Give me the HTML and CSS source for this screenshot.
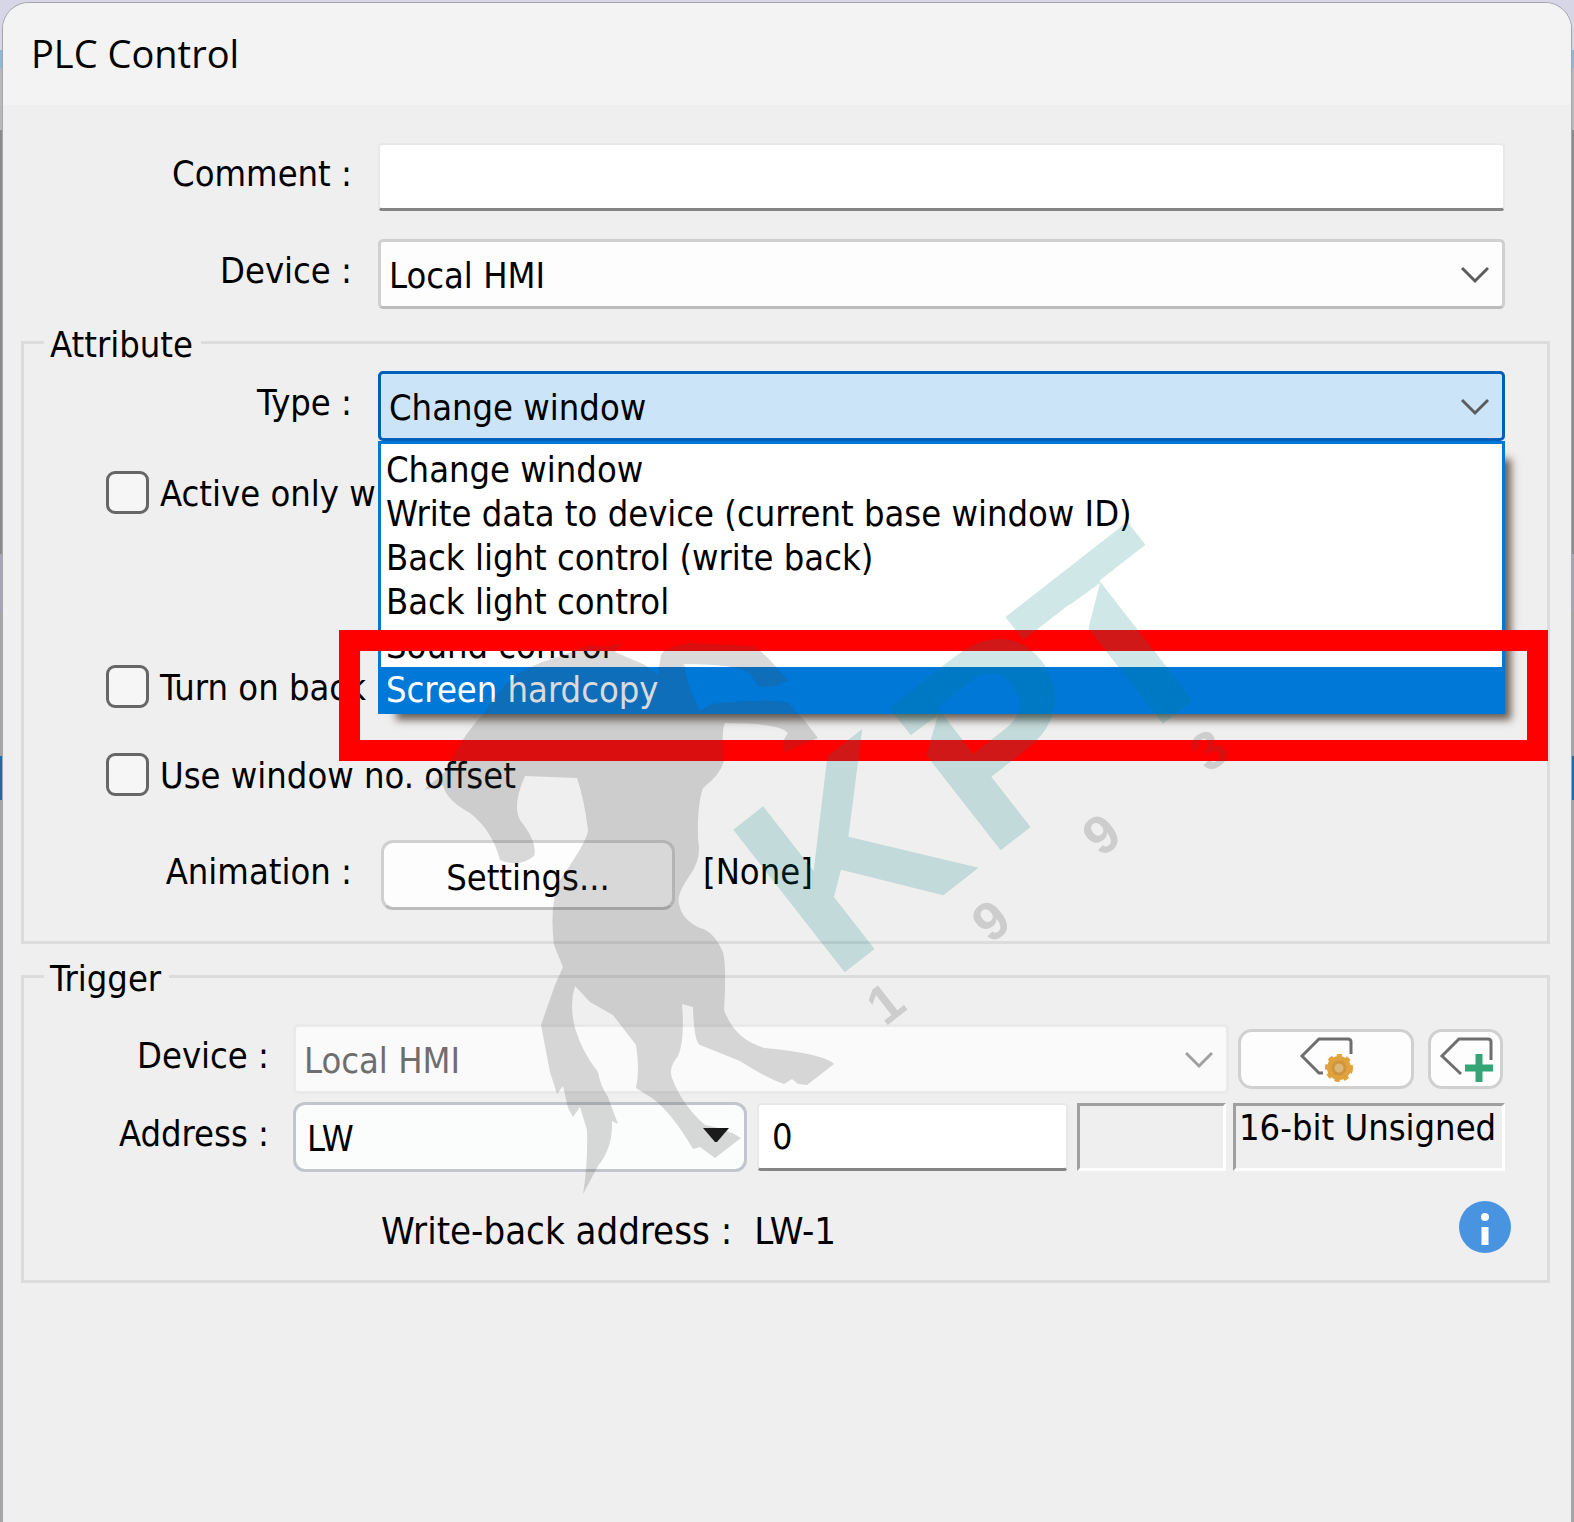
FILE: index.html
```html
<!DOCTYPE html>
<html lang="en">
<head>
<meta charset="UTF-8">
<meta name="viewport" content="width=device-width, initial-scale=1.0">
<title>PLC Control</title>
<link rel="stylesheet" href="styles.css">
</head>
<body>
<div class="dialog">
  <h1 class="titlebar">PLC Control</h1>
  <form class="content">
    <div class="row top-row">
      <label for="comment">Comment :</label>
      <input class="text-box" type="text" id="comment" name="comment">
    </div>
    <div class="row top-row">
      <label for="device">Device :</label>
      <div class="combo">
        <select id="device" name="device"><option>Local HMI</option></select>
        <svg class="chevron" viewBox="0 0 28 18"><path d="M1 2 L14 15 L27 2"/></svg>
      </div>
    </div>

    <fieldset class="attribute">
      <legend>Attribute</legend>
      <div class="row">
        <label for="type">Type :</label>
        <div class="combo open">
          <select id="type" name="type"><option>Change window</option></select>
          <svg class="chevron" viewBox="0 0 28 18"><path d="M1 2 L14 15 L27 2"/></svg>
          <ul class="menu" role="listbox">
            <li>Change window</li>
            <li>Write data to device (current base window ID)</li>
            <li>Back light control (write back)</li>
            <li>Back light control</li>
            <li>Sound control</li>
            <li class="selected">Screen hardcopy</li>
          </ul>
        </div>
      </div>
      <div class="check active-only">
        <input type="checkbox" id="activeOnly">
        <label for="activeOnly">Active only w</label>
      </div>
      <div class="check turn-on">
        <input type="checkbox" id="turnOn">
        <label for="turnOn">Turn on back</label>
      </div>
      <div class="check">
        <input type="checkbox" id="offset">
        <label for="offset">Use window no. offset</label>
      </div>
      <div class="row animation">
        <label for="settings">Animation :</label>
        <button type="button" class="settings" id="settings">Settings...</button>
        <span class="none">[None]</span>
      </div>
    </fieldset>

    <fieldset class="trigger">
      <legend>Trigger</legend>
      <div class="row">
        <label for="triggerDevice">Device :</label>
        <div class="combo">
          <select id="triggerDevice" disabled><option>Local HMI</option></select>
          <svg class="chevron" viewBox="0 0 28 18"><path d="M1 2 L14 15 L27 2"/></svg>
        </div>
        <button type="button" class="tag-button tag-settings" aria-label="Tag settings">
          <svg width="54" height="46" viewBox="0 0 54 46">
            <path class="tag" d="M24 37 H20 L3 20 L20 3 H49 Q52 3 52 6 V18"/>
            <circle cx="40" cy="32" r="12" fill="#e0a23c"/>
            <circle class="teeth" cx="40" cy="32" r="12"/>
            <circle cx="40" cy="32" r="6" fill="#dcb578" stroke="#d0953a" stroke-width="3"/>
          </svg>
        </button>
        <button type="button" class="tag-button tag-add" aria-label="Add tag">
          <svg width="54" height="46" viewBox="0 0 54 46">
            <path class="tag" d="M22 38 L3 20 L20 3 H49 Q52 3 52 6 V24"/>
            <path d="M40 18 V46 M26 32 H54" stroke="#35a576" stroke-width="7"/>
          </svg>
        </button>
      </div>
      <div class="row address">
        <label for="address">Address :</label>
        <div class="combo address-type">
          <select id="address"><option>LW</option></select>
          <svg class="arrow" viewBox="0 0 26 16"><path d="M0 1 H26 L14 15 H12 Z"/></svg>
        </div>
        <input class="text-box address-no" type="text" value="0" aria-label="Address number">
        <div class="sunken"></div>
        <div class="sunken format">16-bit Unsigned</div>
      </div>
      <div class="write-back">
        <span>Write-back address :</span>
        <span>LW-1</span>
        <svg class="info" width="52" height="52" viewBox="0 0 52 52">
          <circle cx="26" cy="26" r="26" fill="#4894e0"/>
          <circle cx="26" cy="16" r="4" fill="#fff"/>
          <path d="M26 26 V44" stroke="#fff" stroke-width="7"/>
        </svg>
      </div>
    </fieldset>
  </form>
</div>

<svg class="watermark" width="860" height="720" viewBox="400 500 860 720" aria-hidden="true">
  <mask id="cuts">
    <rect x="400" y="500" width="860" height="720" fill="#fff"/>
    <path d="M1100 583 L1088 630 L1068 606 Z M938 715 L926 757 L907 738 Z" fill="#000"/>
  </mask>
  <path class="horse" d="M622 643 L615 652 L645 665 L658 675 L661 655 Q664 647 690 643 Q735 645 755 646 L768 658 L788 680 Q775 689 758 686 L750 674 Q740 664 684 664 L690 690 L700 711 L712 704 Q770 698 788 703 L804 720 L818 738 L785 752 Q780 743 788 733 Q780 723 725 723 Q721 730 724 760 Q722 773 703 788 Q697 805 698 840 Q702 858 690 875 Q676 895 679 904 Q682 920 700 928 Q713 931 722 950 Q727 960 724 1010 Q735 1040 765 1048 Q825 1054 834 1064 L807 1085 L798 1084 L792 1079 L784 1084 Q770 1080 740 1061 L700 1045 Q694 1042 693 1007 L682 1004 Q685 1040 678 1056 Q668 1068 672 1078 Q682 1105 705 1125 Q728 1129 741 1138 L715 1158 L700 1147 L693 1149 Q672 1113 652 1098 L636 1088 Q640 1070 636 1045 L613 1015 L590 1002 L575 986 Q569 1005 575 1028 Q582 1052 598 1072 Q600 1085 608 1097 L618 1124 L612 1121 Q613 1148 598 1166 L583 1194 Q588 1165 587 1130 L580 1107 L573 1117 L568 1108 L563 1086 L557 1094 L550 1072 L541 1025 L555 985 L563 967 L554 945 Q549 905 560 880 Q588 840 588 830 Q584 798 577 778 L525 776 Q512 805 520 820 Q538 843 534 856 Q520 868 500 860 Q492 830 470 813 Q446 800 443 785 L424 790 L447 770 Q460 738 485 712 Q508 670 555 658 L590 645 L605 647 Z"/>
  <g mask="url(#cuts)">
    <text class="brand" transform="translate(845 972) rotate(-38)" x="-18 180 342">KPT</text>
  </g>
  <text class="year" transform="translate(885 1027) rotate(-38)" x="0 134 274 411">1993</text>
</svg>
</body>
</html>
```
FILE: styles.css
```css
* {
  box-sizing: border-box;
}
body {
  margin: 0;
  padding: 3px 3px 0;
  min-height: 100vh;
  display: flex;
  position: relative;
  overflow-x: hidden;
  font-family: 'DejaVu Sans Condensed', 'Noto Sans', sans-serif;
  font-size: 36px;
  line-height: 44px;
  color: #000;
  /* what shows of the desktop behind the dialog */
  background: linear-gradient(#d6d6e6 0 50px, #8fb8d4 50px 68px, #b8b8bc 68px 130px, #8a8a8a 130px 554px, #a8a4b4 554px 612px, #a5a5a5 612px 756px, #1d6ca4 756px 800px, #a5a5a5 800px);
}
.dialog {
  flex: 1;
  min-width: 0;
  background-color: #efefef;
  border-radius: 26px 26px 0 0;
  box-shadow: 0 0 0 1px #a5a5ad;
}
.titlebar {
  margin: 0;
  height: 102px;
  padding: 28px 28px 0;
  border-radius: 26px 26px 0 0;
  background-color: #f3f3f3;
  font-family: 'Open Sans', sans-serif;
  font-size: 38px;
  font-weight: normal;
}
.content {
  padding: 38px 21px 0 18px;
}
.row {
  display: flex;
  align-items: center;
}
.row > label {
  flex: none;
  width: 328px;
  margin-right: 26px;
  padding-bottom: 6px;
  text-align: right;
}
.top-row {
  padding: 0 45px 0 3px;
  margin-bottom: 28px;
}
.top-row + .top-row {
  margin-bottom: 11px;
}
input, select, button {
  font: inherit;
  color: inherit;
}
.text-box {
  flex: 1;
  min-width: 0;
  height: 68px;
  padding: 0 13px;
  border: 2px solid #e8e8e8;
  border-bottom: 3px solid #858585;
  border-radius: 4px;
  background-color: #fff;
}
.combo {
  flex: 1;
  min-width: 0;
  position: relative;
}
.combo select {
  display: block;
  appearance: none;
  width: 100%;
  height: 70px;
  padding: 4px 8px 0;
  border: 3px solid #d0d0d0;
  border-bottom-color: #bcbcbc;
  border-radius: 5px;
  background-color: #fdfdfd;
}
.combo select:disabled {
  border-color: #eaeaea;
  background-color: #fafafa;
  color: #6e6e6e;
  opacity: 1;
}
.combo select:disabled + .chevron {
  stroke: #a0a0a0;
}
.combo.open select {
  border-color: #005fb8;
  background-color: #cce4f7;
}
.chevron {
  position: absolute;
  right: 16px;
  top: 27px;
  width: 28px;
  height: 18px;
  fill: none;
  stroke: #5c5c5c;
  stroke-width: 3;
}
.menu {
  position: absolute;
  z-index: 1;
  top: 100%;
  left: 0;
  right: 0;
  margin: 0;
  padding: 3px 0 0;
  list-style: none;
  border: 3px solid #0078d7;
  background-color: #fff;
  box-shadow: 12px 12px 8px -6px rgba(50, 35, 25, 0.7);
}
.menu li {
  height: 44px;
  line-height: 46px;
  padding-left: 5px;
  white-space: nowrap;
}
.menu .selected {
  position: relative;
  background-color: #0078d7;
  color: #fff;
}
/* red callout round the selected entry */
.menu .selected::after {
  content: "";
  position: absolute;
  top: -37px;
  right: -46px;
  bottom: -50px;
  left: -42px;
  border: 21px solid #f00;
}
fieldset {
  min-width: 0;
  margin: 0;
  padding: 7px 42px 31px 0;
  border: 3px solid #dcdcdc;
}
legend {
  margin-left: 20px;
  padding: 6px 8px 0 6px;
  line-height: 38px;
}
.check {
  display: flex;
  align-items: center;
  height: 44px;
  margin-bottom: 44px;
  padding-left: 82px;
  white-space: nowrap;
}
.check input {
  appearance: none;
  width: 43px;
  height: 43px;
  margin: 0 11px 0 0;
  border: 3px solid #666;
  border-radius: 9px;
  background-color: #f6f6f6;
}
.check label {
  padding-top: 4px;
}
.active-only {
  margin-top: 29px;
  margin-bottom: 150px;
}
.settings {
  width: 294px;
  height: 70px;
  margin-left: 3px;
  padding: 6px 0 0;
  border: 3px solid #d0d0d0;
  border-bottom-color: #bcbcbc;
  border-radius: 12px;
  background-color: #fdfdfd;
}
.none {
  margin-left: 28px;
  padding-bottom: 6px;
}
.trigger {
  margin-top: 10px;
  padding-top: 26px;
  padding-bottom: 27px;
}
.trigger .row > label {
  width: 245px;
  margin-right: 24px;
}
.tag-button {
  flex: none;
  height: 60px;
  padding: 0;
  border: 3px solid #d0d0d0;
  border-radius: 14px;
  background-color: #fdfdfd;
}
.tag-button svg {
  display: block;
  margin: 0 auto;
}
.tag {
  fill: none;
  stroke: #6e6e6e;
  stroke-width: 3;
}
.teeth {
  fill: none;
  stroke: #e0a23c;
  stroke-width: 4;
  stroke-dasharray: 5 4;
}
.tag-settings {
  width: 176px;
  margin-left: 9px;
}
.tag-add {
  width: 75px;
  margin: 0 2px 0 14px;
}
.address {
  margin-top: 8px;
}
.address .address-type {
  flex: 454 1 0;
}
.address-type select {
  padding-left: 11px;
  border-color: #c0c6cc;
  border-radius: 12px;
  background-color: #fbfdfd;
}
.arrow {
  position: absolute;
  right: 18px;
  top: 25px;
  width: 26px;
  height: 16px;
  fill: #111;
}
.address .address-no {
  flex: 281 1 0;
  margin: 0 9px 0 10px;
}
.sunken {
  flex: none;
  width: 149px;
  height: 68px;
  margin-right: 7px;
  border: 3px solid #fff;
  border-top-color: #a0a0a0;
  border-left-color: #a0a0a0;
}
.format {
  width: 272px;
  margin-right: 0;
  padding-left: 3px;
  white-space: nowrap;
}
.write-back {
  display: flex;
  align-items: center;
  gap: 22px;
  height: 52px;
  margin-top: 29px;
  padding-left: 357px;
  font-size: 38px;
}
.write-back span {
  padding-top: 8px;
}
.info {
  margin-left: auto;
  margin-right: -6px;
}
.watermark {
  position: absolute;
  z-index: 2;
  top: 500px;
  left: 400px;
  overflow: visible;
  pointer-events: none;
}
.horse, .year {
  fill: rgba(70, 70, 70, 0.2);
}
.brand, .year {
  font-family: 'Liberation Sans', sans-serif;
  font-weight: bold;
}
.brand {
  font-size: 263px;
  fill: rgba(0, 126, 120, 0.19);
}
.year {
  font-size: 54px;
}
```
